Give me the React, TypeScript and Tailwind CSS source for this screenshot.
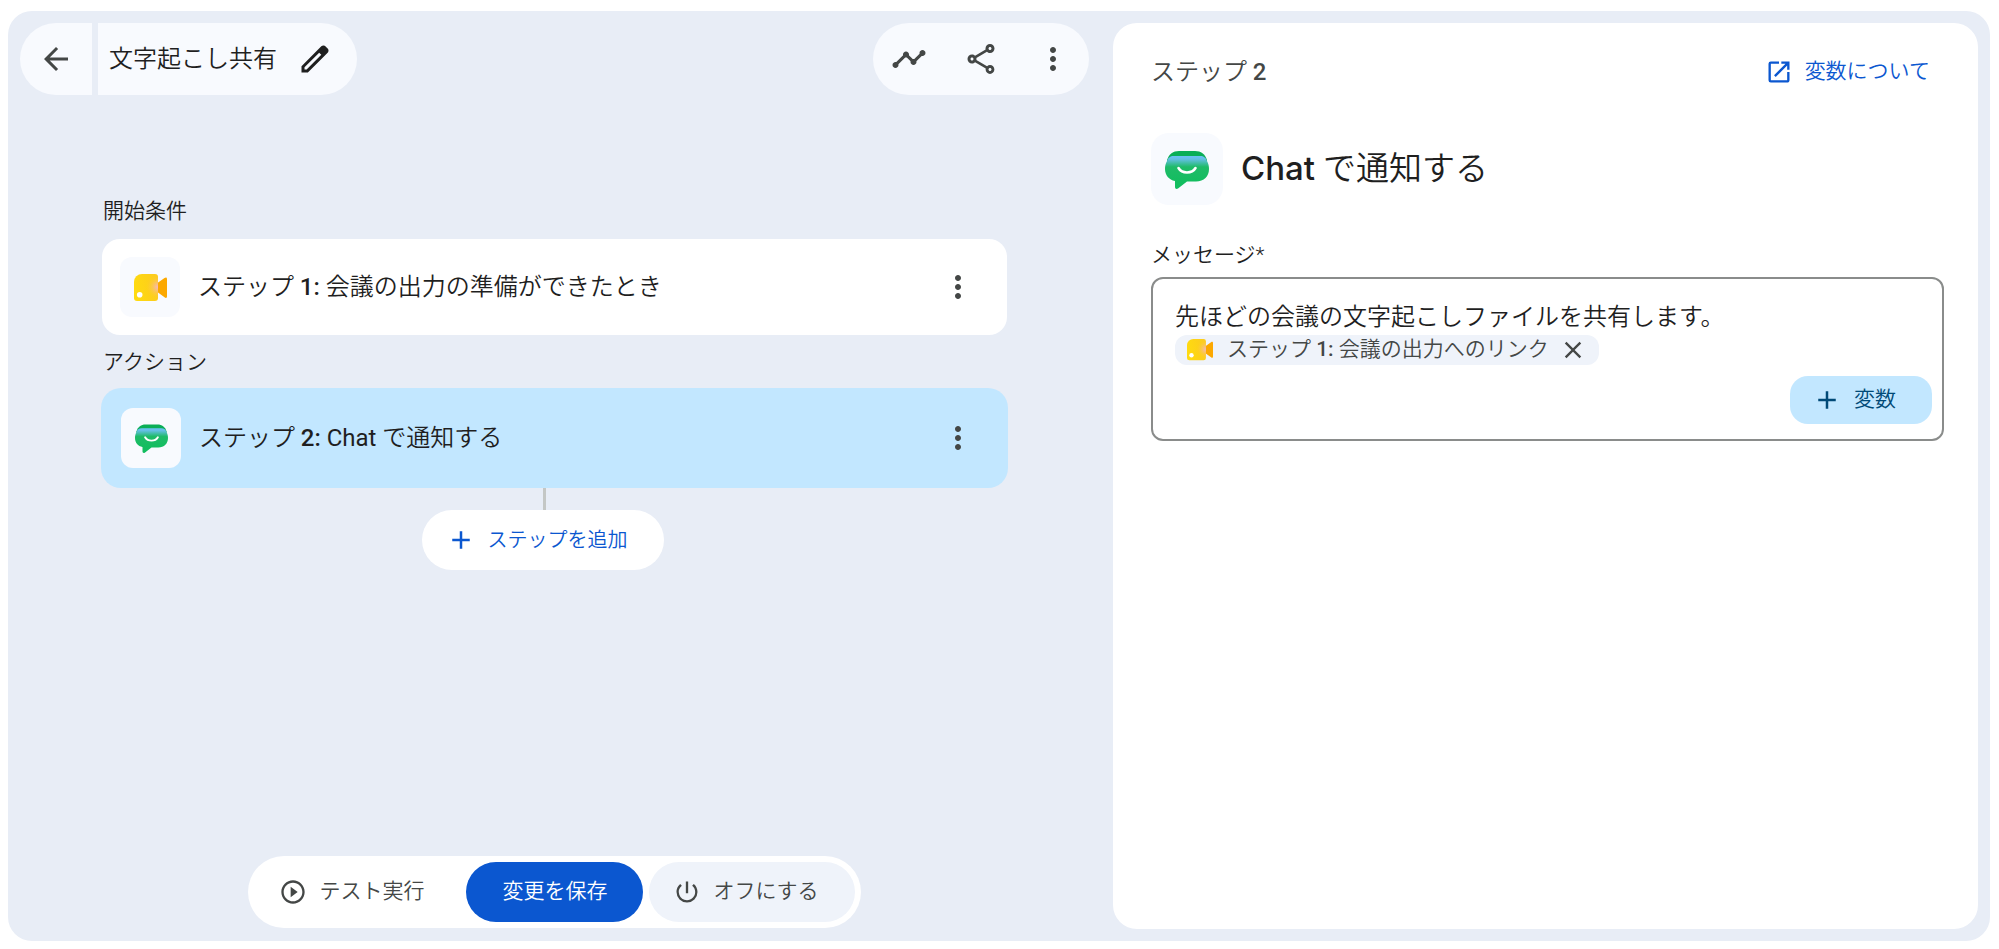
import React from 'react';
import {
  MdAdd,
  MdArrowBack,
  MdClose,
  MdMoreVert,
  MdOpenInNew,
  MdOutlineShare,
  MdPlayCircleOutline,
  MdPowerSettingsNew,
  MdTimeline,
} from 'react-icons/md';

const EditIcon: React.FC<{ className?: string }> = ({ className }) => (
  <svg viewBox="0 -960 960 960" fill="currentColor" className={className} aria-hidden="true">
    <path d="M200-200h57l391-391-57-57-391 391v57Zm-80 80v-170l528-527q12-11 26.5-17t30.5-6q16 0 31 6t26 18l55 56q12 11 17.5 26t5.5 30q0 16-5.5 30.5T817-647L290-120H120Z" />
  </svg>
);

const MeetIcon: React.FC<{ className?: string; id: string }> = ({ className, id }) => (
  <svg viewBox="0 0 33 27" className={className} aria-hidden="true">
    <defs>
      <linearGradient id={`${id}-body`} x1="0" y1="0.6" x2="1" y2="0.4">
        <stop offset="0" stopColor="#ffdb0f" />
        <stop offset="1" stopColor="#fccb1f" />
      </linearGradient>
      <radialGradient id={`${id}-glow`} cx="24" cy="13" r="12" gradientUnits="userSpaceOnUse">
        <stop offset="0" stopColor="#f5b5c8" />
        <stop offset="1" stopColor="#ffcf20" stopOpacity="0" />
      </radialGradient>
    </defs>
    <path d="M22 10 30.5 4C32 3 33 3.4 33 5.2v17c0 1.8-1 2.2-2.5 1L22 17Z" fill="#fca800" />
    <path d="M8 0h13a3 3 0 0 1 3 3v21a3 3 0 0 1-3 3H3a3 3 0 0 1-3-3V8a8 8 0 0 1 8-8Z" fill={`url(#${id}-body)`} />
    <path d="M8 0h13a3 3 0 0 1 3 3v21a3 3 0 0 1-3 3H3a3 3 0 0 1-3-3V8a8 8 0 0 1 8-8Z" fill={`url(#${id}-glow)`} />
    <circle cx="5.7" cy="20.7" r="2.8" fill="#fff" />
  </svg>
);

const ChatIcon: React.FC<{ className?: string; id: string }> = ({ className, id }) => (
  <svg viewBox="0 -2 44 40" className={className} aria-hidden="true">
    <defs>
      <linearGradient id={id} x1="0" y1="5" x2="0" y2="31" gradientUnits="userSpaceOnUse">
        <stop offset="0" stopColor="#6cc0f5" />
        <stop offset="0.12" stopColor="#64bfe4" />
        <stop offset="0.42" stopColor="#1fbb68" />
        <stop offset="1" stopColor="#13bd5f" />
      </linearGradient>
    </defs>
    <path d="M14 0h16c6 0 10 3 12 9v3H2V9C4 3 8 0 14 0Z" fill="#0aae57" />
    <path d="M9 5h26c4 0 6 2 7 5 1.5 3 2 5 2 8 0 7.5-5 12.5-13 12.5h-9l-9 7c-1.5 1-3 .3-3-1.5v-6C4 29 0 24 0 18c0-3 .5-5 2-8 1-3 3-5 7-5Z" fill={`url(#${id})`} />
    <path d="M13.5 17c3.5 6 13.5 6 17 0" fill="none" stroke="#fff" strokeWidth="2.6" strokeLinecap="round" />
  </svg>
);

interface StepCardProps {
  icon: React.ReactNode;
  number: number;
  title: React.ReactNode;
  active?: boolean;
}

const StepCard: React.FC<StepCardProps> = ({ icon, number, title, active }) => (
  <div
    className={
      active
        ? 'flex items-center rounded-[20px] bg-[#c2e7ff] py-5 pl-5 pr-8'
        : 'mx-px flex items-center rounded-[18px] bg-white py-[18px] pl-[18px] pr-[31px]'
    }
  >
    <div className="flex size-[60px] shrink-0 items-center justify-center rounded-xl bg-[#f8fafe]">
      {icon}
    </div>
    <p className="ml-[18px] flex-1 text-2xl text-[#1f1f1f]">
      ステップ <span className="font-medium">{number}:</span> {title}
    </p>
    <button type="button" aria-label="その他の操作" className="text-[#444746]">
      <MdMoreVert className="size-9" />
    </button>
  </div>
);

const Editor: React.FC = () => (
  <section className="flex min-w-0 flex-col">
    <header className="flex items-center justify-between pl-3 pr-6 pt-3">
      <div className="flex gap-1.5">
        <button
          type="button"
          aria-label="戻る"
          className="flex h-[72px] w-[72px] items-center justify-center rounded-l-full rounded-r-md bg-[#f8fafe] text-[#444746]"
        >
          <MdArrowBack className="size-9" />
        </button>
        <div className="flex h-[72px] items-center gap-5 rounded-l-md rounded-r-full bg-[#f8fafe] pl-[11px] pr-6 text-[#1f1f1f]">
          <h1 className="text-2xl">文字起こし共有</h1>
          <button type="button" aria-label="名前を編集">
            <EditIcon className="size-9" />
          </button>
        </div>
      </div>
      <div className="flex h-[72px] items-center gap-9 rounded-full bg-[#f8fafe] px-[18px] text-[#444746]">
        <button type="button" aria-label="アクティビティ">
          <MdTimeline className="size-9" />
        </button>
        <button type="button" aria-label="共有">
          <MdOutlineShare className="size-9" />
        </button>
        <button type="button" aria-label="その他">
          <MdMoreVert className="size-9" />
        </button>
      </div>
    </header>

    <div className="flex-1 pl-[93px] pr-[105px] pt-[100px]">
      <h2 className="mb-3 ml-0.5 text-[21px] leading-8 text-[#1f1f1f]">開始条件</h2>
      <StepCard icon={<MeetIcon id="meet-card" className="w-[33px]" />} number={1} title="会議の出力の準備ができたとき" />
      <h2 className="mb-2.5 ml-0.5 mt-[11px] text-[21px] leading-8 text-[#1f1f1f]">アクション</h2>
      <StepCard
        active
        icon={<ChatIcon id="chat-card" className="w-[33px]" />}
        number={2}
        title={<><span className="font-normal">Chat</span> で通知する</>}
      />
      <div className="mr-6 flex flex-col items-center">
        <div className="ml-1 h-[22px] w-[3px] bg-[#c4c7c5]" />
        <button
          type="button"
          className="flex h-[60px] items-center gap-3 rounded-full bg-white pl-6 pr-9 text-xl text-[#0b57d0]"
        >
          <MdAdd className="size-[30px]" />
          ステップを追加
        </button>
      </div>
    </div>

    <footer className="mb-[13px] flex justify-center pr-3">
      <div className="flex gap-1.5 rounded-full bg-white p-1.5 text-[21px] text-[#444746]">
        <button type="button" className="flex h-[60px] items-center gap-3 pl-[25px] pr-9">
          <MdPlayCircleOutline className="size-7" />
          テスト実行
        </button>
        <button type="button" className="h-[60px] rounded-full bg-[#0b57d0] px-9 text-white">
          変更を保存
        </button>
        <button type="button" className="flex h-[60px] items-center gap-3 rounded-full bg-[#eff3fa] pl-6 pr-9">
          <MdPowerSettingsNew className="size-7" />
          オフにする
        </button>
      </div>
    </footer>
  </section>
);

const StepPanel: React.FC = () => (
  <aside className="my-3 mr-3 flex min-w-0 flex-col rounded-3xl bg-white pl-[38px] pr-[34px] pt-[31px]">
    <div className="flex items-center justify-between pr-3.5">
      <p className="text-2xl leading-9 text-[#444746]">
        ステップ <span className="font-medium">2</span>
      </p>
      <a href="#variables" className="flex items-center gap-3 text-[21px] text-[#0b57d0]">
        <MdOpenInNew className="size-7" />
        変数について
      </a>
    </div>

    <div className="mt-[43px] flex items-center gap-[18px]">
      <div className="flex size-[72px] items-center justify-center rounded-[18px] bg-[#f8fafe]">
        <ChatIcon id="chat-panel" className="w-11" />
      </div>
      <h2 className="text-[33px] text-[#1f1f1f]">
        <span className="font-['Inter',sans-serif] font-medium">Chat</span> で通知する
      </h2>
    </div>

    <label htmlFor="message" className="mt-[34px] text-[21px] leading-8 text-[#1f1f1f]">
      メッセージ*
    </label>
    <div className="mt-1.5 rounded-xl border-2 border-[#8a8c8b] pb-[15px] pl-[22px] pr-2.5 pt-5">
      <textarea
        id="message"
        rows={1}
        className="block w-full resize-none overflow-hidden text-2xl leading-9 text-[#1f1f1f] outline-none"
        defaultValue="先ほどの会議の文字起こしファイルを共有します。"
      />
      <div className="flex h-[30px] w-fit items-center rounded-xl bg-[#eff3fa] px-3 text-[21px] text-[#444746]">
        <MeetIcon id="meet-chip" className="mr-3.5 w-[26px]" />
        <span>
          ステップ <span className="font-medium">1:</span> 会議の出力へのリンク
        </span>
        <button type="button" aria-label="変数を削除" className="ml-2.5 text-[#444746]">
          <MdClose className="size-7" />
        </button>
      </div>
      <div className="mt-[11px] flex justify-end">
        <button
          type="button"
          className="flex h-12 items-center gap-3 rounded-[18px] bg-[#c2e7ff] pl-[22px] pr-9 text-[21px] text-[#004a77]"
        >
          <MdAdd className="size-[30px]" />
          変数
        </button>
      </div>
    </div>
  </aside>
);

const App: React.FC = () => {
  return (
    <main
      className="h-screen bg-white pb-2 pl-2 pr-[9px] pt-[11px] font-['Roboto','Noto_Sans_CJK_JP',sans-serif] font-[350]"
      lang="ja"
    >
      <div className="grid h-full grid-cols-[1105fr_877fr] rounded-3xl bg-[#e8edf6]">
        <Editor />
        <StepPanel />
      </div>
    </main>
  );
};

export default App;
